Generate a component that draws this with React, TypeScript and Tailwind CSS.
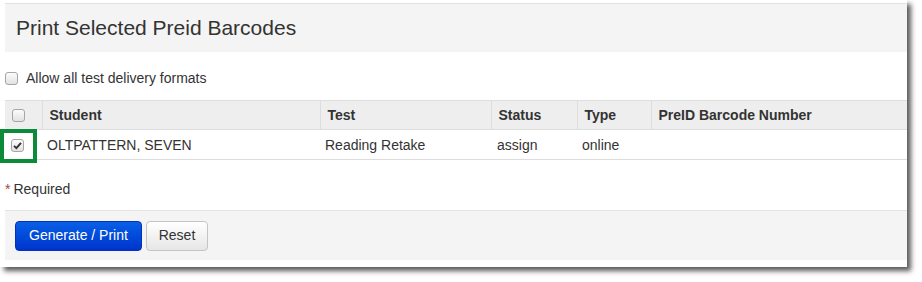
import React from 'react';

function Box({ checked = false }: { checked?: boolean }) {
  return (
    <span className="inline-flex h-[13px] w-[13px] items-center justify-center rounded-[3px] border border-[#a6a6a6] bg-gradient-to-b from-[#fcfcfc] to-[#e2e2e2]">
      {checked && (
        <svg width="9" height="9" viewBox="0 0 9 9">
          <path d="M1 4.8 L3.4 7.2 L8 1.8" fill="none" stroke="#333" strokeWidth="1.9" />
        </svg>
      )}
    </span>
  );
}

const cols = [
  { label: '', w: 'w-[37px]' },
  { label: 'Student', w: 'w-[278px]' },
  { label: 'Test', w: 'w-[171px]' },
  { label: 'Status', w: 'w-[86px]' },
  { label: 'Type', w: 'w-[74px]' },
  { label: 'PreID Barcode Number', w: '' },
];

export default function App() {
  return (
    <div className="bg-white h-[282px] w-[922px] font-['Liberation_Sans',Arial,sans-serif] text-[#333]">
      <div className="relative w-[907px] h-[267px] bg-white pt-[3px] shadow-[4px_4px_5px_rgba(0,0,0,0.65)]">
        {/* Heading */}
        <div className="ml-[5px] h-[49px] border-t border-[#e1e1e1] bg-[#f4f4f4] pl-[11px] flex items-center">
          <h2 className="text-[21px] leading-none pb-[1px]">Print Selected Preid Barcodes</h2>
        </div>

        <div className="ml-[5px] h-[48px] flex items-center gap-[8px] pt-[4px]">
          <Box />
          <span className="text-[14px]">Allow all test delivery formats</span>
        </div>

        <table className="ml-[5px] w-[902px] table-fixed border-collapse text-[14px]">
          <thead>
            <tr className="bg-[#eeeeee] border-y border-[#dddddd]">
              {cols.map((c, i) => (
                <th key={i} className={`${c.w} h-[29px] text-left font-bold px-[7px] border-l border-[#dddddd] first:border-l-0`}>
                  {i === 0 ? <span className="flex"><Box /></span> : c.label}
                </th>
              ))}
            </tr>
          </thead>
          <tbody>
            <tr className="border-b border-[#dddddd]">
              <td className="h-[30px] px-[6px] pt-[1px]"><span className="flex"><Box checked /></span></td>
              <td className="px-[5px] pt-[1px]">OLTPATTERN, SEVEN</td>
              <td className="px-[5px] pt-[1px]">Reading Retake</td>
              <td className="px-[6px] pt-[1px]">assign</td>
              <td className="px-[5px] pt-[1px]">online</td>
              <td className="px-[5px]"></td>
            </tr>
          </tbody>
        </table>

        {/* highlight */}
        <div className="absolute left-0 top-[129px] h-[34px] w-[37px] border-[4px] border-[#0b8a3a]" />

        <div className="ml-[5px] h-[50px] flex items-center text-[14px] pt-[8px]">
          <span className="text-[#a94442] mr-[3px]">*</span>
          <span>Required</span>
        </div>

        <div className="ml-[5px] h-[50px] border-t border-[#e3e3e3] bg-[#f4f4f4] flex items-center gap-[4px] pl-[10px]">
          <button className="h-[30px] w-[127px] rounded-[4px] border border-[#0033bb] bg-gradient-to-b from-[#0b5fe6] to-[#0033cc] text-white text-[14px]">
            Generate / Print
          </button>
          <button className="h-[30px] w-[62px] rounded-[4px] border border-[#c4c4c4] bg-gradient-to-b from-[#ffffff] to-[#e6e6e6] text-[#333] text-[14px]">
            Reset
          </button>
        </div>
      </div>
    </div>
  );
}
